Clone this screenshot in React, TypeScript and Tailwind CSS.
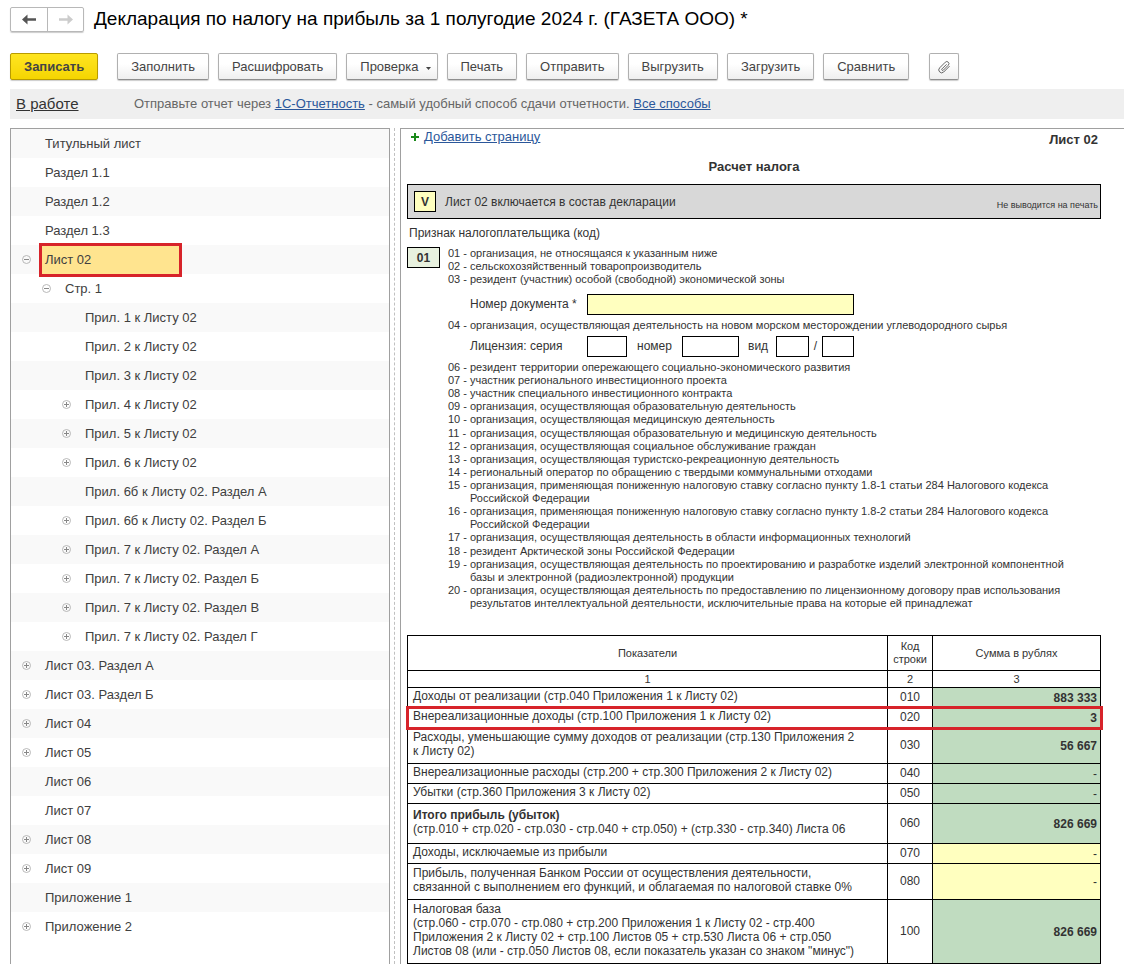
import { useState } from "react";

type TreeNode = {
  label: string;
  level: 0 | 1 | 2;
  toggle?: "open" | "closed";
};

const ACTIONS = [
  { label: "Заполнить" },
  { label: "Расшифровать" },
  { label: "Проверка", menu: true },
  { label: "Печать" },
  { label: "Отправить" },
  { label: "Выгрузить" },
  { label: "Загрузить" },
  { label: "Сравнить" },
];

const TREE: TreeNode[] = [
  { label: "Титульный лист", level: 0 },
  { label: "Раздел 1.1", level: 0 },
  { label: "Раздел 1.2", level: 0 },
  { label: "Раздел 1.3", level: 0 },
  { label: "Лист 02", level: 0, toggle: "open" },
  { label: "Стр. 1", level: 1, toggle: "open" },
  { label: "Прил. 1 к Листу 02", level: 2 },
  { label: "Прил. 2 к Листу 02", level: 2 },
  { label: "Прил. 3 к Листу 02", level: 2 },
  { label: "Прил. 4 к Листу 02", level: 2, toggle: "closed" },
  { label: "Прил. 5 к Листу 02", level: 2, toggle: "closed" },
  { label: "Прил. 6 к Листу 02", level: 2, toggle: "closed" },
  { label: "Прил. 6б к Листу 02. Раздел А", level: 2 },
  { label: "Прил. 6б к Листу 02. Раздел Б", level: 2, toggle: "closed" },
  { label: "Прил. 7 к Листу 02. Раздел А", level: 2, toggle: "closed" },
  { label: "Прил. 7 к Листу 02. Раздел Б", level: 2, toggle: "closed" },
  { label: "Прил. 7 к Листу 02. Раздел В", level: 2, toggle: "closed" },
  { label: "Прил. 7 к Листу 02. Раздел Г", level: 2, toggle: "closed" },
  { label: "Лист 03. Раздел А", level: 0, toggle: "closed" },
  { label: "Лист 03. Раздел Б", level: 0, toggle: "closed" },
  { label: "Лист 04", level: 0, toggle: "closed" },
  { label: "Лист 05", level: 0, toggle: "closed" },
  { label: "Лист 06", level: 0 },
  { label: "Лист 07", level: 0 },
  { label: "Лист 08", level: 0, toggle: "closed" },
  { label: "Лист 09", level: 0, toggle: "closed" },
  { label: "Приложение 1", level: 0 },
  { label: "Приложение 2", level: 0, toggle: "closed" },
];

const INDENT = ["pl-[10px]", "pl-[30px]", "pl-[50px]"];

const CODES_TOP = [
  ["01", "организация, не относящаяся к указанным ниже"],
  ["02", "сельскохозяйственный товаропроизводитель"],
  ["03", "резидент (участник) особой (свободной) экономической зоны"],
];

const CODES_GROUPS = [
  [
    ["06", "резидент территории опережающего социально-экономического развития"],
    ["07", "участник регионального инвестиционного проекта"],
    ["08", "участник специального инвестиционного контракта"],
    ["09", "организация, осуществляющая образовательную деятельность"],
    ["10", "организация, осуществляющая медицинскую деятельность"],
  ],
  [
    ["11", "организация, осуществляющая образовательную и медицинскую деятельность"],
    ["12", "организация, осуществляющая социальное обслуживание граждан"],
    ["13", "организация, осуществляющая туристско-рекреационную деятельность"],
    ["14", "региональный оператор по обращению с твердыми коммунальными отходами"],
    ["15", "организация, применяющая пониженную налоговую ставку согласно пункту 1.8-1 статьи 284 Налогового кодекса\nРоссийской Федерации"],
    ["16", "организация, применяющая пониженную налоговую ставку согласно пункту 1.8-2 статьи 284 Налогового кодекса\nРоссийской Федерации"],
    ["17", "организация, осуществляющая деятельность в области информационных технологий"],
  ],
  [
    ["18", "резидент Арктической зоны Российской Федерации"],
    ["19", "организация, осуществляющая деятельность по проектированию и разработке изделий электронной компонентной\nбазы и электронной (радиоэлектронной) продукции"],
    ["20", "организация, осуществляющая деятельность по предоставлению по лицензионному договору прав использования\nрезультатов интеллектуальной деятельности, исключительные права на которые ей принадлежат"],
  ],
];

type Row = {
  title?: string;
  text: string;
  code: string;
  value: string;
  height: string;
  editable?: boolean;
  marked?: boolean;
};

const ROWS: Row[] = [
  { text: "Доходы от реализации (стр.040 Приложения 1 к Листу 02)", code: "010", value: "883 333", height: "h-5" },
  { text: "Внереализационные доходы (стр.100 Приложения 1 к Листу 02)", code: "020", value: "3", height: "h-5", marked: true },
  { text: "Расходы, уменьшающие сумму доходов от реализации (стр.130 Приложения 2\nк Листу 02)", code: "030", value: "56 667", height: "h-9" },
  { text: "Внереализационные расходы (стр.200 + стр.300 Приложения 2 к Листу 02)", code: "040", value: "-", height: "h-5" },
  { text: "Убытки (стр.360 Приложения 3 к Листу 02)", code: "050", value: "-", height: "h-5" },
  { title: "Итого прибыль (убыток)", text: "(стр.010 + стр.020 - стр.030 - стр.040 + стр.050) + (стр.330 - стр.340) Листа 06", code: "060", value: "826 669", height: "h-10" },
  { text: "Доходы, исключаемые из прибыли", code: "070", value: "-", height: "h-5", editable: true },
  { text: "Прибыль, полученная Банком России от осуществления деятельности,\nсвязанной с выполнением его функций, и облагаемая по налоговой ставке 0%", code: "080", value: "-", height: "h-9", editable: true },
  { text: "Налоговая база\n(стр.060 - стр.070 - стр.080 + стр.200 Приложения 1 к Листу 02 - стр.400\nПриложения 2 к Листу 02 + стр.100 Листов 05 + стр.530 Листа 06 + стр.050\nЛистов 08 (или - стр.050 Листов 08, если показатель указан со знаком \"минус\")", code: "100", value: "826 669", height: "h-16" },
];

const BUTTON =
  "flex h-[27px] items-center rounded-xs border border-[#b0b0b0] border-b-[#8e8e8e] bg-linear-to-b from-white from-40% to-[#efefef] text-[13px] text-[#444] shadow-[0_1px_1px_#ccc]";

function Arrow({ className, flip }: { className: string; flip?: boolean }) {
  return (
    <svg viewBox="0 0 14 11" className={`h-[11px] w-[14px] ${className}`} aria-hidden>
      <path
        d="M0 5.5 5.5 0.5V4.2H14V6.8H5.5V10.5Z"
        fill="currentColor"
        transform={flip ? "translate(14 0) scale(-1 1)" : undefined}
      />
    </svg>
  );
}

function Clip() {
  return (
    <svg viewBox="0 0 14 14" className="size-[14px]" fill="none" stroke="#666" strokeWidth="1" strokeLinecap="round" aria-hidden>
      <path d="M9.3 4.6 5 8.9a.9.9 0 0 0 1.3 1.3l5-5a2.1 2.1 0 0 0-3-3L2.6 7.9a2.9 2.9 0 0 0 4.1 4.1l5.6-5.6" />
    </svg>
  );
}

function Toggle({ state, label }: { state: "open" | "closed"; label: string }) {
  return (
    <button type="button" aria-label={label} className="flex size-[11px] items-center justify-center text-[#b0b0b0]">
      <svg viewBox="0 0 11 11" className="size-[11px]" fill="none" stroke="currentColor">
        <circle cx="5.5" cy="5.5" r="4" strokeWidth="0.9" />
        <path d={state === "open" ? "M3 5.5H8" : "M3 5.5H8M5.5 3V8"} stroke="#888" />
      </svg>
    </button>
  );
}

function CodeList({ items }: { items: string[][] }) {
  return (
    <ul>
      {items.map(([code, text]) => (
        <li key={code} className="flex">
          <span className="w-[22px] shrink-0">{code} -</span>
          <span className="whitespace-pre">{text}</span>
        </li>
      ))}
    </ul>
  );
}

function Sidebar() {
  const [selected, setSelected] = useState("Лист 02");

  return (
    <nav className="w-[380px] shrink-0 overflow-hidden border border-b-0 border-[#a0a0a0]">
      <ul>
        {TREE.map((node) => (
          <li
            key={node.label}
            className={`flex h-[29px] items-center odd:bg-[#f9f9f9] ${INDENT[node.level]}`}
          >
            <span className="flex w-[18px] shrink-0">
              {node.toggle && <Toggle state={node.toggle} label={node.label} />}
            </span>
            <button
              type="button"
              onClick={() => setSelected(node.label)}
              className={`h-[28px] text-left text-[13px] text-[#404040] ${
                selected === node.label
                  ? "w-[137px] bg-[#ffe48f] pl-[3px] outline-3 outline-[#d7232a] ml-[3px]"
                  : "pl-[6px]"
              }`}
            >
              {node.label}
            </button>
          </li>
        ))}
      </ul>
    </nav>
  );
}

function IndicatorTable() {
  return (
    <table className="mt-[25px] w-full table-fixed border-collapse text-[12px] leading-[14px] [&_td]:border [&_td]:border-black [&_th]:border [&_th]:border-black [&_th]:font-normal">
      <colgroup>
        <col />
        <col className="w-[45px]" />
        <col className="w-[168px]" />
      </colgroup>
      <thead className="text-[11px] leading-[13px]">
        <tr className="h-[35px]">
          <th>Показатели</th>
          <th>Код строки</th>
          <th>Сумма в рублях</th>
        </tr>
        <tr className="h-[17px]">
          <th>1</th>
          <th>2</th>
          <th>3</th>
        </tr>
      </thead>
      <tbody>
        {ROWS.map((row) => (
          <tr
            key={row.code}
            className={`${row.height} ${row.marked ? "outline-3 -outline-offset-1 outline-[#d7232a]" : ""}`}
          >
            <td className="pb-[3px] pl-[5px] whitespace-pre">
              {row.title && <b className="block">{row.title}</b>}
              {row.text}
            </td>
            <td className="pb-[2px] text-center">{row.code}</td>
            <td
              className={`pr-[3px] text-right align-middle ${row.value === "-" ? "" : "font-bold"} ${
                row.editable ? "bg-[#ffffbf]" : "bg-[#c0dcc0]"
              }`}
            >
              {row.value}
            </td>
          </tr>
        ))}
      </tbody>
    </table>
  );
}

function Sheet() {
  const [included, setIncluded] = useState(true);

  return (
    <main className="min-w-0 flex-1 overflow-hidden border-t border-l border-[#a0a0a0] pr-[23px] pl-[6px] text-[#333]">
      <div className="flex h-[22px] items-start justify-between pr-[3px] pl-1">
        <a href="#add" className="flex items-center gap-[5px] text-[13px] leading-4 text-[#2b579a]">
          <svg viewBox="0 0 8 8" className="size-2" aria-hidden>
            <path d="M4 0V8M0 4H8" stroke="#1a8a1a" strokeWidth="2" />
          </svg>
          <span className="underline">Добавить страницу</span>
        </a>
        <span className="pt-[2px] text-[13px] leading-[18px] font-bold">Лист 02</span>
      </div>
      <h2 className="pt-[6px] text-center text-[13px] leading-[20px] font-bold">Расчет налога</h2>

      <div className="mt-[7px] flex h-[35px] items-center justify-between border border-black bg-[#d8d8d8] pr-[2px] pl-[6px]">
        <label className="flex items-center gap-[9px] text-[12px]">
          <input
            type="checkbox"
            checked={included}
            onChange={(e) => setIncluded(e.target.checked)}
            className="peer sr-only"
          />
          <span className="flex h-[21px] w-[22px] items-center justify-center border border-black bg-[#ffffbf] font-bold">
            {included && "V"}
          </span>
          Лист 02 включается в состав декларации
        </label>
        <span className="pt-2 text-[9px]">Не выводится на печать</span>
      </div>

      <label htmlFor="payer" className="mt-[5px] block pl-[2px] text-[12px] leading-[18px]">
        Признак налогоплательщика (код)
      </label>
      <div className="mt-[5px] flex items-start gap-2">
        <input
          id="payer"
          defaultValue="01"
          className="h-[21px] w-[33px] shrink-0 border border-black bg-[#e8f1df] text-center text-[12px] font-bold"
        />
        <div className="text-[11px] leading-[13px]">
          <CodeList items={CODES_TOP} />
          <div className="mt-[8px] flex items-center pl-[22px] text-[12px]">
            <label htmlFor="doc" className="w-[117px]">
              Номер документа *
            </label>
            <input id="doc" className="h-[21px] w-[267px] border border-black bg-[#ffffbf] px-1" />
          </div>
          <div className="mt-[4px]">
            <CodeList items={[["04", "организация, осуществляющая деятельность на новом морском месторождении углеводородного сырья"]]} />
          </div>
          <div className="mt-[4px] flex items-center pl-[22px] text-[12px]">
            <label htmlFor="series" className="w-[117px]">
              Лицензия: серия
            </label>
            <input id="series" className="h-[21px] w-[40px] border border-black px-1" />
            <label htmlFor="number" className="w-[55px] pl-[10px]">
              номер
            </label>
            <input id="number" className="h-[21px] w-[57px] border border-black px-1" />
            <label htmlFor="kind" className="w-[37px] pl-[9px]">
              вид
            </label>
            <input id="kind" className="h-[21px] w-[33px] border border-black px-1" />
            <span className="w-[13px] text-center">/</span>
            <input aria-label="вид" className="h-[21px] w-[32px] border border-black px-1" />
          </div>
          <div className="mt-[4px] flex flex-col gap-px">
            {CODES_GROUPS.map((group) => (
              <CodeList key={group[0][0]} items={group} />
            ))}
          </div>
        </div>
      </div>

      <IndicatorTable />
    </main>
  );
}

export default function App() {
  return (
    <div className="flex h-screen flex-col overflow-hidden bg-white pl-[10px] font-['Liberation_Sans',Arial,sans-serif]">
      <header className="flex h-[38px] shrink-0 items-center gap-[10px]">
        <div className="flex h-[25px] overflow-hidden rounded-xs border border-[#b8b8b8] shadow-[0_1px_1px_#ccc]">
          <button type="button" aria-label="Назад" className="flex w-[37px] items-center justify-center border-r border-[#b8b8b8]">
            <Arrow className="text-[#555]" />
          </button>
          <button type="button" aria-label="Вперед" className="flex w-[35px] items-center justify-center">
            <Arrow className="text-[#ccc]" flip />
          </button>
        </div>
        <h1 className="text-[19px] whitespace-nowrap text-black">
          Декларация по налогу на прибыль за 1 полугодие 2024 г. (ГАЗЕТА ООО) *
        </h1>
      </header>

      <div className="mt-[15px] flex shrink-0 gap-[9px]">
        <button
          type="button"
          className="mr-[10px] flex h-[27px] items-center rounded-xs border border-[#b89b00] bg-linear-to-b from-[#ffe51f] to-[#f5d500] px-[13px] text-[13px] font-bold text-[#444] shadow-[0_1px_1px_#ccc]"
        >
          Записать
        </button>
        {ACTIONS.map((action) => (
          <button
            key={action.label}
            type="button"
            className={`${BUTTON} pl-[13px] ${action.menu ? "pr-[6px]" : "pr-[13px]"}`}
          >
            {action.label}
            {action.menu && (
              <svg viewBox="0 0 5 3" className="mt-1 ml-[7px] h-[3px] w-[5px]" aria-hidden>
                <path d="M0 0H5L2.5 3Z" fill="#444" />
              </svg>
            )}
          </button>
        ))}
        <button type="button" aria-label="Файлы" className={`${BUTTON} ml-[11px] w-[30px] justify-center`}>
          <Clip />
        </button>
      </div>

      <div className="mt-[9px] flex h-[30px] shrink-0 items-center bg-[#efefef] pl-[6px] text-[13px] text-[#666]">
        <a href="#status" className="w-[118px] text-[15px] text-[#333] underline">
          В работе
        </a>
        <p>
          Отправьте отчет через{" "}
          <a href="#reporting" className="text-[#2b579a] underline">
            1С-Отчетность
          </a>{" "}
          - самый удобный способ сдачи отчетности.{" "}
          <a href="#methods" className="text-[#2b579a] underline">
            Все способы
          </a>
        </p>
      </div>

      <div className="mt-[9px] flex min-h-0 flex-1">
        <Sidebar />
        <div className="mr-[5px] w-[5px] border-r border-dashed border-[#c0c0c0]" />
        <Sheet />
      </div>
    </div>
  );
}
